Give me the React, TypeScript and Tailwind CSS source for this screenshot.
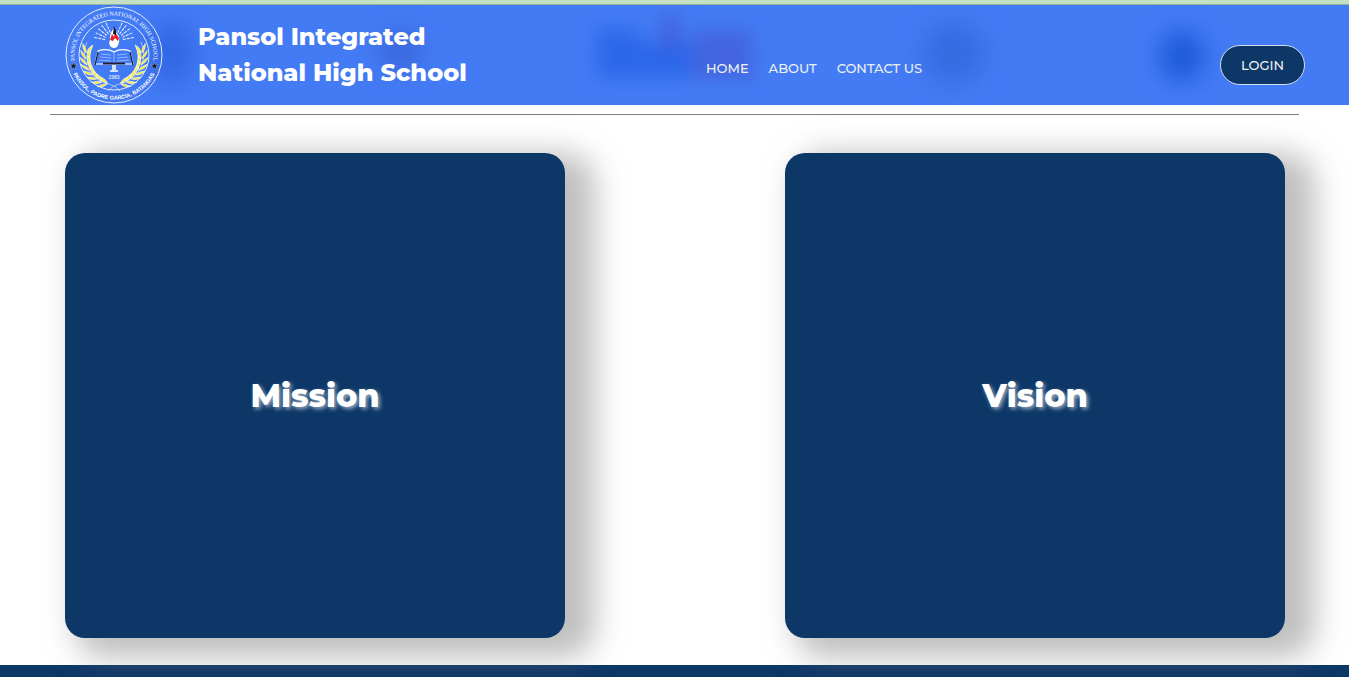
import React from "react";

const rays = [-80, -66, -52, -38, -24, 24, 38, 52, 66, 80];
const leaves = [0, 1, 2, 3, 4, 5, 6, 7];

function Branch() {
  return (
    <g>
      <path d="M55 85 Q50 79 40 77 A30 30 0 0 1 22 36" fill="none" stroke="#e4ecff" strokeWidth="0.6" />
      {leaves.map((i) => (
        <g key={i} transform={`rotate(${16 + i * 12} 49 51)`}>
          <path d="M50 79 Q46 79 41 84 Q47 84 50 79Z" fill="#f5e936" stroke="#fff" strokeWidth="0.5" />
          <path d="M50 78 Q47 74 41 74 Q45 79 50 78Z" fill="#f5e936" stroke="#fff" strokeWidth="0.7" />
        </g>
      ))}
    </g>
  );
}

function Star({ x }: { x: number }) {
  return (
    <path
      transform={`translate(${x} 60)`}
      d="M0 -3.8 L1 -1.2 L3.8 -1.2 L1.6 0.6 L2.4 3.4 L0 1.7 L-2.4 3.4 L-1.6 0.6 L-3.8 -1.2 L-1 -1.2Z"
      fill="#101a2c"
      stroke="#dfe8ff"
      strokeWidth="0.3"
    />
  );
}

function Seal() {
  return (
    <svg viewBox="0 0 196 196" className="size-[98px] shrink-0" role="img" aria-label="School seal">
      <defs>
        <path id="sealTop" d="M24 126 A79 79 0 1 1 172 126" />
        <path id="sealBottom" d="M10 116 A90 90 0 0 0 186 116" />
      </defs>
      <g transform="scale(2)">
        <circle cx="49" cy="49" r="48" fill="none" stroke="#e4ecff" strokeWidth="1" />
        <circle cx="49" cy="49" r="35" fill="none" stroke="#e4ecff" strokeWidth="1" />
        <Star x={8.5} />
        <Star x={89.5} />
        <Branch />
        <g transform="translate(98 0) scale(-1 1)">
          <Branch />
        </g>
        {rays.map((a) => (
          <path
            key={a}
            d="M49 26 V15"
            transform={`rotate(${a} 49 35)`}
            stroke="#f2f6ff"
            strokeWidth="1"
            strokeDasharray="3 1"
          />
        ))}
        <path d="M45 34 Q44 28 49 22 Q51 27 54 30 Q55 37 52 41 Q49 43 46 41 Q43 38 45 34Z" fill="#fff" />
        <path d="M45 34 L47 28 L49 31 L50 26 L54 32 L53 35 L50 32 L48 35Z" fill="#e3202b" />
        <path d="M48 28 L49 20 L51 25 L51 29Z" fill="#15151f" />
        <path d="M33 45 Q42 42 49 46 Q56 42 65 45 L68 58 H30Z" fill="#437bf5" stroke="#fff" strokeWidth="1.2" />
        <path
          d="M49 46 V57 M36 48 L46 49 M35 51 L46 52 M34 54 L46 55 M52 49 L62 48 M52 52 L63 51 M52 55 L64 54"
          stroke="#c9d8ff"
          strokeWidth="0.6"
        />
        <path d="M30 59 L33 46 M68 59 L65 46" stroke="#101a2c" strokeWidth="1.2" />
        <path d="M38 57.5 H60" stroke="#251a2c" strokeWidth="1.8" />
        <path d="M47 59 H51 V64 H53 V66 H45 V64 H47Z" fill="#d5e1ff" />
      </g>
      <text fill="#fff" className="font-['Liberation_Serif',serif] text-[12px]">
        <textPath href="#sealTop" startOffset="50%" textAnchor="middle">
          PANSOL INTEGRATED NATIONAL HIGH SCHOOL
        </textPath>
      </text>
      <text fill="#fff" className="font-['Liberation_Sans',sans-serif] text-[11px] font-bold">
        <textPath href="#sealBottom" startOffset="50%" textAnchor="middle">
          PANSOL, PADRE GARCIA, BATANGAS
        </textPath>
      </text>
      <text x="98" y="145" textAnchor="middle" fill="#fff" className="font-['Liberation_Sans',sans-serif] text-[10px]">
        1983
      </text>
    </svg>
  );
}

function Glows() {
  return (
    <svg aria-hidden="true" className="pointer-events-none absolute inset-0 size-full">
      <defs>
        <filter id="soft" x="-100%" y="-100%" width="300%" height="300%" colorInterpolationFilters="sRGB">
          <feGaussianBlur stdDeviation="9" />
        </filter>
        <filter id="softer" x="-100%" y="-100%" width="300%" height="300%" colorInterpolationFilters="sRGB">
          <feGaussianBlur stdDeviation="12" />
        </filter>
      </defs>
      <g filter="url(#softer)">
        <ellipse cx="172" cy="48" rx="22" ry="32" fill="#2a5edb" fillOpacity="0.7" />
        <ellipse cx="400" cy="46" rx="20" ry="20" fill="#3556c8" fillOpacity="0.6" />
        <ellipse cx="954" cy="48" rx="32" ry="32" fill="#2d66d8" fillOpacity="0.65" />
        <ellipse cx="1182" cy="51" rx="22" ry="25" fill="#1452d4" fillOpacity="0.85" />
      </g>
      <g filter="url(#soft)">
        <path d="M597 24 H628 L648 38 H692 V72 H650 V72 H597Z" fill="#2260e6" fillOpacity="0.7" />
        <rect x="692" y="26" width="60" height="48" fill="#4256d0" fillOpacity="0.6" />
        <rect x="660" y="10" width="20" height="34" fill="#4250d0" fillOpacity="0.55" />
      </g>
    </svg>
  );
}

const links = ["HOME", "ABOUT", "CONTACT US"];

function Card({ title }: { title: string }) {
  return (
    <section className="flex h-[485px] w-[500px] items-center justify-center rounded-[20px] bg-[#0c3767] shadow-[20px_10px_30px_10px_rgba(128,128,128,0.5)]">
      <h2 className="text-[32px] font-extrabold text-white [text-shadow:2px_2px_4px_rgba(255,255,255,0.6)]">{title}</h2>
    </section>
  );
}

export default function App() {
  return (
    <div className="min-h-screen overflow-x-hidden bg-white font-['Montserrat','Inter',sans-serif]">
      <div className="h-[5px] border-b border-[#93b09a] bg-[#c5e1c5]" />
      <header className="relative bg-[#437bf5]">
        <Glows />
        <div className="relative flex h-[100px] items-center pl-[65px] pr-11">
          <div className="flex flex-1 items-center gap-[35px]">
            <Seal />
            <h1 className="text-2xl font-extrabold leading-9 text-white">
              Pansol Integrated
              <br />
              National High School
            </h1>
          </div>
          <div className="flex flex-1 items-center justify-between pl-[42px] pt-5">
            <nav className="flex gap-5 pt-1.5 text-[13px] font-medium leading-5 text-[#edf0f1]">
              {links.map((l) => (
                <a key={l} href="#" className="whitespace-nowrap">
                  {l}
                </a>
              ))}
            </nav>
            <button className="h-10 w-[85px] rounded-full border border-[#d5dfea] bg-[#0c3767] pt-px text-[13px] font-medium text-[#edf0f1]">
              LOGIN
            </button>
          </div>
        </div>
      </header>
      <main className="relative">
        <hr className="mx-[50px] mt-[9px] border-t border-[#808080]" />
        <div className="flex justify-between pb-[27px] pl-[65px] pr-16 pt-[38px]">
          <Card title="Mission" />
          <Card title="Vision" />
        </div>
      </main>
      <footer className="h-3 bg-[#0c3767]" />
    </div>
  );
}
